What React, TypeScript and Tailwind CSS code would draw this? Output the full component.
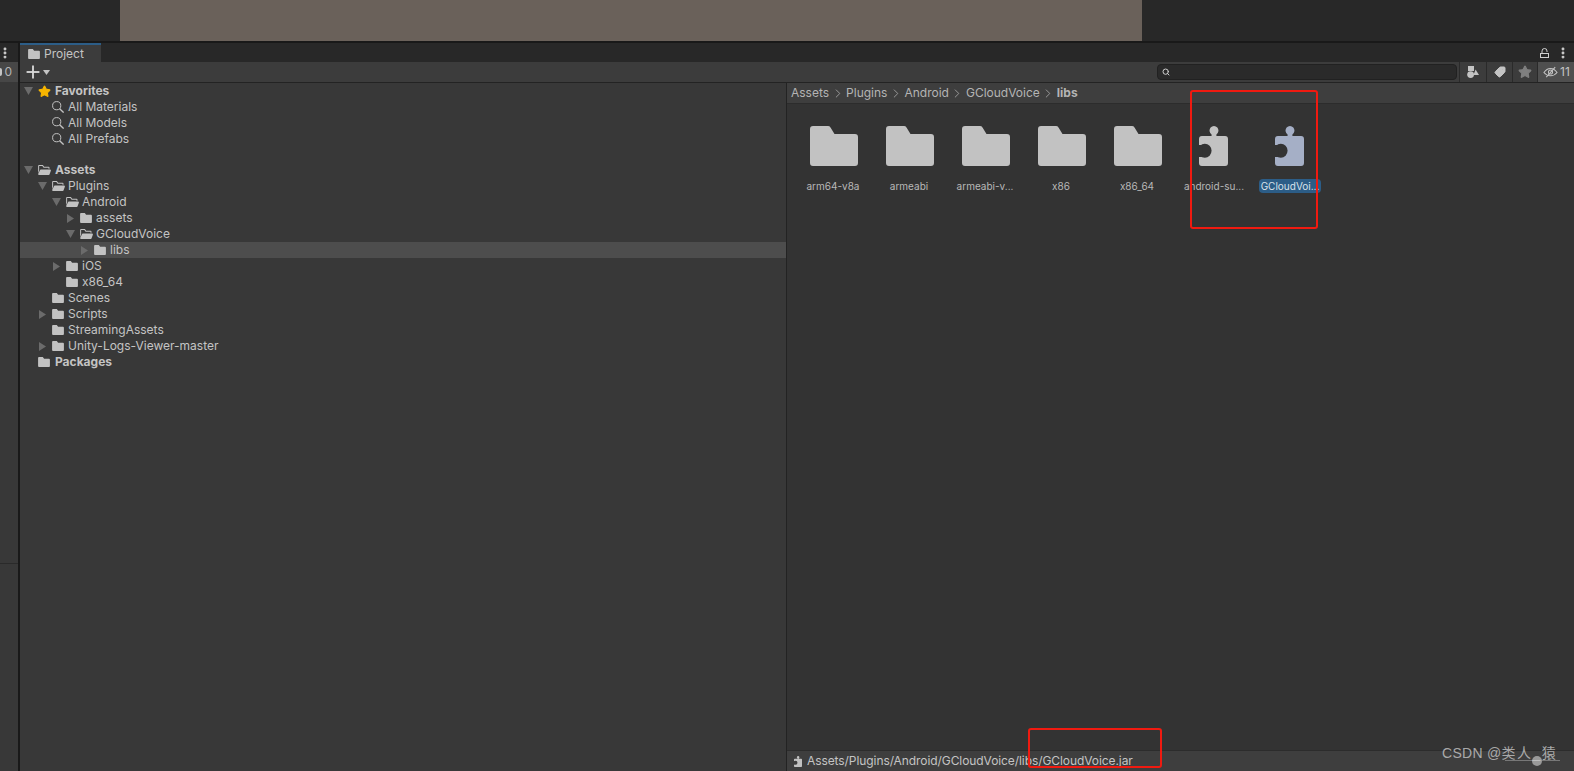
import React from "react";
import { MoreVertical, Plus, Search, Star, Tag } from "lucide-react";

const font = "font-['Inter','Liberation_Sans',sans-serif]";

function ClosedFolder({ className = "" }: { className?: string }) {
    return (
        <svg viewBox="0 0 13 11" className={className} fill="#c2c2c2">
            <path d="M1 0H5.2L6.6 2H12a1 1 0 0 1 1 1V10a1 1 0 0 1-1 1H1a1 1 0 0 1-1-1V1a1 1 0 0 1 1-1z" />
        </svg>
    );
}

function OpenFolder({ className = "" }: { className?: string }) {
    return (
        <svg viewBox="0 0 14 11" className={className} fill="#c2c2c2">
            <path d="M1 0H5.2L6.6 2H11.5a1 1 0 0 1 1 1V4H11.4V3.1H6L4.6 1.1H1.1V6L0 9V1a1 1 0 0 1 1-1z" />
            <path d="M3 5H13a1 1 0 0 1 1 1.2L12.6 10.2a1 1 0 0 1-1 .8H1a1 1 0 0 1-.9-1.3L2 5.8A1 1 0 0 1 3 5z" />
        </svg>
    );
}

function BigFolder() {
    return (
        <svg viewBox="0 0 48 40" className="w-12 h-10" fill="#c2c2c2">
            <path d="M3 0H18a3 3 0 0 1 2.5 1.4L24.5 8H45a3 3 0 0 1 3 3V37a3 3 0 0 1-3 3H3a3 3 0 0 1-3-3V3a3 3 0 0 1 3-3z" />
        </svg>
    );
}

function Puzzle({ color, hole = "#333333", className = "w-[29px] h-10 mr-[2px]" }: { color: string; hole?: string; className?: string }) {
    return (
        <svg viewBox="0 0 30 40" preserveAspectRatio="none" className={className}>
            <path
                fill={color}
                d="M13 10V8.5a4.6 4.6 0 1 1 5 0V10H27a3 3 0 0 1 3 3V37a3 3 0 0 1-3 3H3a3 3 0 0 1-3-3V13a3 3 0 0 1 3-3z"
            />
            <circle cx="6" cy="24.7" r="7" fill={hole} />
            <rect x="-1" y="19" width="5" height="12" fill={hole} />
        </svg>
    );
}

function Arrow({ open }: { open: boolean }) {
    if (open) {
        return (
            <svg viewBox="0 0 9 8" className="w-[9px] h-2" fill="#6b6b6b">
                <path d="M0 0H9L4.5 8z" />
            </svg>
        );
    }
    return (
        <svg viewBox="0 0 7 9" className="w-[7px] h-[9px]" fill="#6b6b6b">
            <path d="M0 0L7 4.5L0 9z" />
        </svg>
    );
}

function Magnifier() {
    return (
        <svg viewBox="0 0 12 12" className="w-3 h-3" fill="none" stroke="#c2c2c2" strokeWidth="1">
            <circle cx="4.7" cy="4.7" r="4.1" />
            <path d="M7.7 7.7L11.6 11.6" strokeWidth="1.3" />
        </svg>
    );
}

type Row = {
    label: string;
    depth: number;
    arrow?: "open" | "closed";
    icon: "star" | "search" | "open" | "closed";
    bold?: boolean;
    selected?: boolean;
};

const favorites: Row[] = [
    { label: "Favorites", depth: 0, arrow: "open", icon: "star", bold: true },
    { label: "All Materials", depth: 1, icon: "search" },
    { label: "All Models", depth: 1, icon: "search" },
    { label: "All Prefabs", depth: 1, icon: "search" },
];

const assets: Row[] = [
    { label: "Assets", depth: 0, arrow: "open", icon: "open", bold: true },
    { label: "Plugins", depth: 1, arrow: "open", icon: "open" },
    { label: "Android", depth: 2, arrow: "open", icon: "open" },
    { label: "assets", depth: 3, arrow: "closed", icon: "closed" },
    { label: "GCloudVoice", depth: 3, arrow: "open", icon: "open" },
    { label: "libs", depth: 4, arrow: "closed", icon: "closed", selected: true },
    { label: "iOS", depth: 2, arrow: "closed", icon: "closed" },
    { label: "x86_64", depth: 2, icon: "closed" },
    { label: "Scenes", depth: 1, icon: "closed" },
    { label: "Scripts", depth: 1, arrow: "closed", icon: "closed" },
    { label: "StreamingAssets", depth: 1, icon: "closed" },
    { label: "Unity-Logs-Viewer-master", depth: 1, arrow: "closed", icon: "closed" },
    { label: "Packages", depth: 0, icon: "closed", bold: true },
];

function TreeRow({ row }: { row: Row }) {
    return (
        <div
            className={`h-4 flex items-center text-xs text-[#c4c4c4] ${row.selected ? "bg-[#4d4d4d]" : ""}`}
            style={{ paddingLeft: 3 + row.depth * 14 }}
        >
            <div className="w-[11px] flex justify-center shrink-0">
                {row.arrow ? <Arrow open={row.arrow === "open"} /> : null}
            </div>
            <div className="w-5 pl-1 shrink-0 flex items-center">
                {row.icon === "star" && <Star size={13} fill="#f7b500" stroke="#f7b500" />}
                {row.icon === "search" && <Magnifier />}
                {row.icon === "open" && <OpenFolder className="w-[13px] h-[10px]" />}
                {row.icon === "closed" && <ClosedFolder className="w-3 h-[10px]" />}
            </div>
            <span className={row.bold ? "font-bold ml-px" : ""}>{row.label}</span>
        </div>
    );
}

const items = ["arm64-v8a", "armeabi", "armeabi-v...", "x86", "x86_64"];
const crumbs = ["Assets", "Plugins", "Android", "GCloudVoice"];

export default function App() {
    return (
        <div className={`relative w-[1574px] h-[771px] overflow-hidden bg-[#282828] ${font}`}>
            {/* scene view leftover on top */}
            <div className="h-[41px] pl-[120px]">
                <div className="w-[1022px] h-full bg-[#6a615a]" />
            </div>
            <div className="h-[2px] bg-[#191919]" />

            <div className="flex h-[728px]">
                {/* left sliver of the neighbouring panel */}
                <div className="w-[18px] flex flex-col bg-[#383838] overflow-hidden">
                    <div className="h-[19px] bg-[#282828] flex items-center">
                        <MoreVertical size={14} stroke="#d0d0d0" strokeWidth={3} className="ml-[-2px]" />
                    </div>
                    <div className="h-5 bg-[#474747] flex items-center justify-between pr-[6px] text-xs text-[#b4b4b4]">
                        <div className="w-[2px] h-2 rounded-r-sm bg-[#c4c4c4]" />
                        0
                    </div>
                    <div className="h-[482px] border-b border-[#2a2a2a]" />
                </div>
                <div className="w-[2px] bg-[#191919]" />

                <div className="flex-1 flex flex-col min-w-0">
                    {/* tab strip */}
                    <div className="h-[19px] flex items-stretch bg-[#282828]">
                        <div className="w-[81px] bg-[#3c3c3c] border-t-2 border-[#2c5d87] flex items-center gap-[4px] pl-2 text-xs text-[#c4c4c4]">
                            <ClosedFolder className="w-3 h-[10px]" />
                            Project
                        </div>
                        <div className="ml-auto flex items-center gap-[7px] pr-[4px]">
                            <svg viewBox="0 0 9 10" className="w-[9px] h-[10px]" fill="none" stroke="#d0d0d0" strokeWidth="1">
                                <rect x=".5" y="5.5" width="8" height="4" />
                                <path d="M2 5.5V3a2.5 2.5 0 0 1 5 0V4" />
                            </svg>
                            <MoreVertical size={14} stroke="#d0d0d0" strokeWidth={3} />
                        </div>
                    </div>

                    {/* toolbar */}
                    <div className="h-[21px] flex items-center bg-[#3c3c3c] border-b border-[#232323]">
                        <div className="flex items-center pl-[2px] text-[#d8d8d8]">
                            <Plus size={22} strokeWidth={2} strokeLinecap="butt" />
                            <svg viewBox="0 0 7 5" className="w-[7px] h-[5px] ml-[-1px]" fill="#c4c4c4">
                                <path d="M0 0H7L3.5 5z" />
                            </svg>
                        </div>
                        <div className="ml-auto w-[300px] h-4 mr-[2px] rounded bg-[#2a2a2a] border border-[#212121] flex items-center pl-1">
                            <Search size={8} stroke="#d0d0d0" strokeWidth={3} />
                        </div>
                        <div className="h-5 w-[27px] flex items-center justify-center border-l border-[#2a2a2a]">
                            <svg viewBox="0 0 12 12" className="w-3 h-3" fill="#c4c4c4">
                                <rect x="1" y="0" width="6" height="5" />
                                <circle cx="3.6" cy="8.6" r="3.4" />
                                <path d="M8.6 3.4L12 9H6.4z" />
                            </svg>
                        </div>
                        <div className="h-5 w-[26px] flex items-center justify-center border-l border-[#2a2a2a]">
                            <Tag size={12} fill="#c4c4c4" stroke="#c4c4c4" className="rotate-90" />
                        </div>
                        <div className="h-5 w-[25px] flex items-center justify-center border-l border-[#2a2a2a]">
                            <Star size={14} fill="#7f7f7f" stroke="#7f7f7f" />
                        </div>
                        <div className="h-5 w-[37px] flex items-center gap-[2px] pl-[5px] border-l border-[#2a2a2a] bg-[#4f4f4f] text-xs text-[#c4c4c4]">
                            <svg viewBox="0 0 16 12" className="w-[15px] h-3 shrink-0" fill="none" stroke="#c4c4c4" strokeWidth="1.1">
                                <path d="M1 6.5C3 3.5 5.5 2.2 8 2.2S13 3.5 15 6.5C13 9 10.5 10 8 10S3 9 1 6.5z" />
                                <circle cx="8" cy="6" r="2.2" />
                                <path d="M3.5 11.5L13 .8" />
                            </svg>
                            11
                        </div>
                    </div>

                    <div className="flex-1 flex min-h-0">
                        {/* folder tree */}
                        <div className="w-[767px] shrink-0 bg-[#383838] border-r border-[#232323]">
                            {favorites.map((row) => (
                                <TreeRow key={row.label} row={row} />
                            ))}
                            <div className="h-[15px]" />
                            {assets.map((row) => (
                                <TreeRow key={row.label} row={row} />
                            ))}
                        </div>

                        {/* asset browser */}
                        <div className="flex-1 flex flex-col bg-[#333333] min-w-0">
                            <div className="h-[21px] bg-[#3e3e3e] border-b border-[#2c2c2c] flex items-center pl-1 text-xs text-[#b4b4b4]">
                                {crumbs.map((c) => (
                                    <React.Fragment key={c}>
                                        <span>{c}</span>
                                        <svg viewBox="0 0 6 10" className="w-[6px] h-[9px] mx-[5.5px]" fill="none" stroke="#a0a0a0" strokeWidth="1">
                                            <path d="M.7 .7L5 5L.7 9.3" />
                                        </svg>
                                    </React.Fragment>
                                ))}
                                <span className="font-bold">libs</span>
                            </div>

                            <div className="flex-1 flex pl-[9px] pt-[22px] text-[10px] text-[#b8b8b8]">
                                {items.map((name) => (
                                    <div key={name} className="w-[76px] flex flex-col items-center gap-[13px]">
                                        <BigFolder />
                                        <span className="h-[14px] leading-[14px] pr-[2px]">{name}</span>
                                    </div>
                                ))}
                                <div className="w-[76px] flex flex-col items-center gap-[13px]">
                                    <Puzzle color="#c2c2c2" />
                                    <span className="h-[14px] leading-[14px]">android-su...</span>
                                </div>
                                <div className="w-[76px] flex flex-col items-center gap-[13px]">
                                    <Puzzle color="#a5afc6" />
                                    <span className="h-[14px] leading-[14px] px-[2px] rounded-sm bg-[#2c5d87] text-[#d8e2ea]">GCloudVoi...</span>
                                </div>
                            </div>

                            <div className="h-[21px] bg-[#3e3e3e] border-t border-[#2c2c2c] flex items-center pl-[7px] text-xs tracking-[-0.08px] text-[#c4c4c4]">
                                <Puzzle color="#c2c2c2" hole="#3e3e3e" className="w-2 h-[11px] mr-[5px]" />
                                Assets/Plugins/Android/GCloudVoice/libs/GCloudVoice.jar
                            </div>
                        </div>
                    </div>
                </div>
            </div>

            {/* annotations drawn on the screenshot */}
            <div className="absolute left-[1190px] top-[90px] w-[128px] h-[139px] border-2 border-[#f01a10] rounded-[3px]" />
            <div className="absolute left-[1028px] top-[728px] w-[134px] h-10 border-2 border-[#f01a10] rounded-[3px]" />

            {/* icon size slider in the status bar */}
            <div className="absolute left-[1505px] top-[760px] w-[55px] h-px bg-[#777777]" />
            <div className="absolute left-[1532px] top-[756px] w-[10px] h-[10px] rounded-full bg-[#999999]" />

            {/* watermark */}
            <div className="absolute left-[1442px] top-[744px] text-sm leading-[18px] tracking-[0.3px] text-[#c8c8c8]/80 font-['Liberation_Sans','Noto_Sans_CJK_SC',sans-serif]">
                CSDN @<span className="tracking-[1.5px]">类人_猿</span>
            </div>
        </div>
    );
}
